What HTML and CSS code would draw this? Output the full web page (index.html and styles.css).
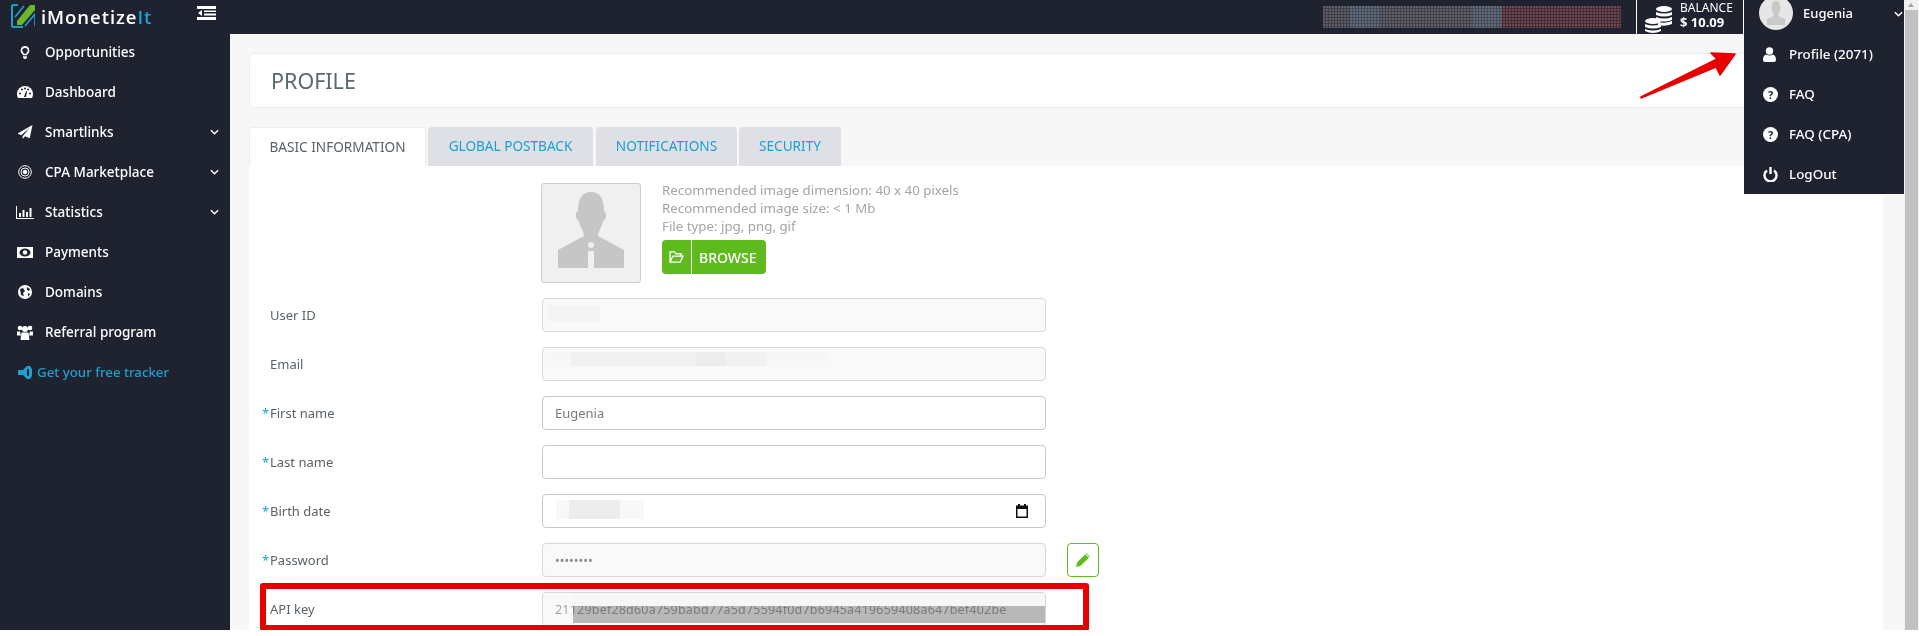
FILE: index.html
```html
<!DOCTYPE html>
<html lang="en">
<head>
<meta charset="utf-8">
<title>Profile</title>
<link rel="stylesheet" href="styles.css">
</head>
<body>
<div class="app">
  <div class="window">
    <header class="topbar">
      <div class="brand">
        <svg class="logo" viewBox="0 0 24 24" width="24" height="24"><path d="M7 1H2.500Q1 1 1 2.500V21.500Q1 23 2.500 23H12" fill="none" stroke="#1f9fd0" stroke-width="2"/><path d="M6 17 19 1H24V6L11 21H6Z" fill="#6cb52d"/><path d="M4 13 13 2M14 22 24 10V22" stroke="#1f9fd0" stroke-width="1.600" fill="none"/></svg>
        <span class="brand-name">iMonetize<span class="brand-it">It</span></span>
      </div>
      <svg class="toggle" viewBox="0 0 19 14" width="19" height="14"><path d="M0 0H19V3H0ZM7 4.500H19V6H7ZM7 7.500H19V9.500H7ZM0 11H19V14H0ZM5 4V10L1 7Z" fill="#fff"/></svg>
      <div class="top-fill"><div class="blur-top"></div></div>
      <div class="balance">
        <svg class="coins" viewBox="0 0 28 30" width="28" height="30" fill="#fff"><ellipse cx="19" cy="5" rx="8" ry="3"/><path d="M11 8q8 3 16 0v3q-8 3-16 0ZM11 13q8 3 16 0v3q-8 3-16 0ZM13 18q7 2 14-1v3q-7 3-14 1Z"/><ellipse cx="8" cy="17" rx="8" ry="3"/><path d="M0 20q8 3 16 0v3q-8 3-16 0ZM0 25q8 3 16 0v2q-8 4-16 0Z"/></svg>
        <div class="balance-text"><span class="balance-label">BALANCE</span><strong class="balance-value">$ 10.09</strong></div>
      </div>
      <div class="user">
        <div class="avatar-small">
          <svg viewBox="0 0 34 34" width="34" height="34"><circle cx="17" cy="17" r="17" fill="#e6e6e6"/><path d="M17 5c3 0 4 2 4 5l1 1-1 3c0 2-2 5-2 6l7 3v6H8v-6l7-3c0-1-2-4-2-6l-1-3 1-1c0-3 1-5 4-5Z" fill="#c9c9c9"/></svg>
        </div>
        <span class="user-name">Eugenia</span>
        <svg class="chev" viewBox="0 0 10 6" width="9" height="6"><path d="M1 1 5 5 9 1" fill="none" stroke="#fff" stroke-width="1.600"/></svg>
      </div>
    </header>
    <div class="body">
      <aside class="sidebar">
        <nav class="nav">
          <a class="nav-item"><span class="nav-icon"><svg viewBox="0 0 12 16" width="10" height="13" fill="#fff"><path d="M6 0a5.500 5.500 0 0 1 3 10q-.5.800-.5 1.500h-5Q3.500 10.800 3 10A5.500 5.500 0 0 1 6 0Zm0 2.500a3 3 0 0 0-2 5.500L4.500 9.500h3L8 8A3 3 0 0 0 6 2.500ZM3.500 12.500h5V14l-1.500 2H5l-1.500-2Z"/></svg></span>Opportunities</a>
          <a class="nav-item"><span class="nav-icon"><svg viewBox="0 0 16 12" width="16" height="12" fill="#fff"><path d="M8 0a8 8 0 0 1 8 8q0 2-1 4H1Q0 10 0 8a8 8 0 0 1 8-8Z"/><g fill="#1f2330"><circle cx="3" cy="7.500" r="1"/><circle cx="5" cy="3.500" r="1"/><circle cx="8" cy="2.500" r="1"/><circle cx="11" cy="3.500" r="1"/><circle cx="13" cy="7.500" r="1"/><path d="M7 11 9 5l1 .5L9 11Z"/></g></svg></span>Dashboard</a>
          <a class="nav-item"><span class="nav-icon"><svg viewBox="0 0 16 16" width="16" height="15" fill="#fff"><path d="M16 0 13 14 8 12 5.500 15V12L13 3 4 11 0 9Z"/></svg></span>Smartlinks<svg class="chev nav-chev" viewBox="0 0 10 6" width="9" height="6"><path d="M1 1 5 5 9 1" fill="none" stroke="#fff" stroke-width="1.600"/></svg></a>
          <a class="nav-item"><span class="nav-icon"><svg viewBox="0 0 14 14" width="14" height="14" fill="none" stroke="#fff"><circle cx="7" cy="7" r="6.300"/><circle cx="7" cy="7" r="4"/><circle cx="7" cy="7" r="1.800" fill="#fff"/></svg></span>CPA Marketplace<svg class="chev nav-chev" viewBox="0 0 10 6" width="9" height="6"><path d="M1 1 5 5 9 1" fill="none" stroke="#fff" stroke-width="1.600"/></svg></a>
          <a class="nav-item"><span class="nav-icon"><svg viewBox="0 0 18 13" width="18" height="13" fill="#fff"><path d="M0 0H1V12H18V13H0ZM3 7H5V11H3ZM6.500 4H8.500V11H6.500ZM10 6H12V11H10ZM13.500 2H15.500V11H13.500Z"/></svg></span>Statistics<svg class="chev nav-chev" viewBox="0 0 10 6" width="9" height="6"><path d="M1 1 5 5 9 1" fill="none" stroke="#fff" stroke-width="1.600"/></svg></a>
          <a class="nav-item"><span class="nav-icon"><svg viewBox="0 0 16 11" width="16" height="11"><path d="M0 0H16V11H0Z" fill="#fff"/><ellipse cx="8" cy="5.500" rx="5.500" ry="4" fill="#1f2330"/><circle cx="8" cy="5.500" r="2.200" fill="#fff"/></svg></span>Payments</a>
          <a class="nav-item"><span class="nav-icon"><svg viewBox="0 0 14 14" width="14" height="14"><circle cx="7" cy="7" r="7" fill="#fff"/><path d="M2 4 5 3 7 6 5 8 6 11 3 10ZM9 2 12 4 11 6 9 5ZM10 8 12 9 10 12Z" fill="#1f2330"/></svg></span>Domains</a>
          <a class="nav-item"><span class="nav-icon"><svg viewBox="0 0 16 15" width="16" height="15" fill="#fff"><circle cx="3" cy="3" r="2.300"/><circle cx="13" cy="3" r="2.300"/><circle cx="8" cy="4" r="3"/><path d="M0 6.500h3l1 4H0ZM16 6.500h-3l-1 4h4ZM4.500 7.500h7l1 7.500h-9Z"/></svg></span>Referral program</a>
          <a class="nav-item nav-tracker"><svg class="tracker-icon" viewBox="0 0 14 13" width="14" height="13" fill="#1f9fd0"><path d="M0 4h5L9 0h3l2 3v7l-2 3H9L5 9H0ZM9 3v7h2V3Z" fill-rule="evenodd"/></svg>Get your free tracker</a>
        </nav>
      </aside>
      <main class="content">
        <div class="page-head"><h1 class="page-title">PROFILE</h1></div>
        <div class="tabs">
          <a class="tab tab-active">BASIC INFORMATION</a>
          <a class="tab tab-postback">GLOBAL POSTBACK</a>
          <a class="tab tab-notif">NOTIFICATIONS</a>
          <a class="tab tab-security">SECURITY</a>
        </div>
        <section class="panel">
          <div class="row-photo">
            <div class="photo">
              <svg viewBox="0 0 66 76" width="66" height="76"><path d="M33 0c9 0 13 7 13 19 3 1 3 8-1 10-1 6-5 11-5 15l26 14v20H0V58l26-14c0-4-4-9-5-15-4-2-4-9-1-10C20 7 24 0 33 0Z" fill="#c6c6c6"/><circle cx="33" cy="53" r="3" fill="#f0f0f0"/><path d="M30 59h6v19h-6Z" fill="#f0f0f0"/></svg>
            </div>
            <div class="photo-info">
              <div class="hint">Recommended image dimension: 40 x 40 pixels</div>
              <div class="hint">Recommended image size: &lt; 1 Mb</div>
              <div class="hint">File type: jpg, png, gif</div>
              <button class="browse" type="button"><span class="browse-icon"><svg viewBox="0 0 16 13" width="15" height="12" fill="none" stroke="#fff" stroke-width="1.400"><path d="M1 12V1h5l1.500 2H13v2.500M1 12h11l3-6.500H4Z"/></svg></span><span class="browse-text">BROWSE</span></button>
            </div>
          </div>
          <div class="field"><label class="label">User ID</label><div class="input input-ro"><span class="smudge smudge-id"></span></div></div>
          <div class="field"><label class="label">Email</label><div class="input input-ro"><span class="smudge smudge-mail"></span></div></div>
          <div class="field"><label class="label"><i class="req">*</i>First name</label><div class="input">Eugenia</div></div>
          <div class="field"><label class="label"><i class="req">*</i>Last name</label><div class="input"></div></div>
          <div class="field"><label class="label"><i class="req">*</i>Birth date</label><div class="input"><span class="smudge smudge-date"></span><svg class="cal" viewBox="0 0 12 14" width="12" height="14"><path d="M2 0H4V1.500H8V0H10V1.500H12V14H0V1.500H2ZM1.500 5V12.500H10.500V5Z" fill="#111"/></svg></div></div>
          <div class="field"><label class="label"><i class="req">*</i>Password</label><div class="input input-ro input-pass">••••••••</div><button class="edit" type="button"><svg viewBox="0 0 12 12" width="14" height="14" fill="#5fba1e"><path d="M0 12 1 8 8 1l3 3-7 7ZM9 0l3 3-.5.500-3-3Z"/></svg></button></div>
          <div class="field"><label class="label">API key</label><div class="input input-ro input-key"><span class="key-text">21129bef28d60a759babd77a5d75594f0d7b6945a419659408a647bef402be</span><span class="smudge smudge-keytop"></span><span class="smudge smudge-key"></span></div></div>
        </section>
      </main>
    </div>
    <div class="menu">
      <a class="menu-item"><span class="menu-icon"><svg viewBox="0 0 13 15" width="13" height="15" fill="#fff"><circle cx="6.500" cy="4" r="3.700"/><path d="M3 7.500Q6.500 9.500 10 7.500 13 8.500 13 13q0 2-2 2H2q-2 0-2-2 0-4.500 3-5.500Z"/></svg></span>Profile (2071)</a>
      <a class="menu-item"><span class="menu-icon"><svg viewBox="0 0 15 15" width="15" height="15"><circle cx="7.500" cy="7.500" r="7.500" fill="#fff"/><text class="q" x="7.500" y="11.500" text-anchor="middle">?</text></svg></span>FAQ</a>
      <a class="menu-item"><span class="menu-icon"><svg viewBox="0 0 15 15" width="15" height="15"><circle cx="7.500" cy="7.500" r="7.500" fill="#fff"/><text class="q" x="7.500" y="11.500" text-anchor="middle">?</text></svg></span>FAQ (CPA)</a>
      <a class="menu-item"><span class="menu-icon"><svg viewBox="0 0 15 15" width="15" height="15" fill="none" stroke="#fff" stroke-width="2.400"><path d="M4 3.500a6 6 0 1 0 7 0"/><path d="M7.500 0V7"/></svg></span>LogOut</a>
    </div>
    <svg class="arrow" viewBox="0 0 100 50" width="100" height="50"><path d="M1 45 77 7 71 1 95 2 80 23 76 15 1 46Z" fill="#e60000" stroke="#e60000" stroke-width="1.500" stroke-linejoin="round"/></svg>
    <div class="redbox"></div>
  </div>
  <div class="scrollbar"><span class="scroll-up"></span><span class="scroll-thumb"></span></div>
</div>
</body>
</html>
```
FILE: styles.css
```css
* { box-sizing: border-box; }
html, body { margin: 0; padding: 0; background: #fff; overflow: hidden; }
body { font-family: "Noto Sans", "Open Sans", sans-serif; font-size: 13px; color: #5a6268; }
a { text-decoration: none; }

.app { display: flex; height: 630px; width: 1919px; }
.window { position: relative; flex: 1; min-width: 0; display: flex; flex-direction: column; height: 630px; background: #f7f7f7; }

.topbar { display: flex; align-items: stretch; height: 34px; background: #1f2330; color: #fff; flex: none; }
.brand { width: 197px; display: flex; align-items: flex-start; padding: 4px 0 0 11px; gap: 6px; flex: none; }
.logo { flex: none; }
.brand-name { font-family: "Open Sans", sans-serif; font-size: 18.500px; font-weight: 600; line-height: 26px; letter-spacing: .95px; }
.brand-it { color: #1f9fd0; }
.toggle { margin-top: 6px; flex: none; }
.top-fill { flex: 1; display: flex; justify-content: flex-end; padding: 6px 15px 6px 0; }
.blur-top { width: 298px; height: 22px; background-image: radial-gradient(circle at 1px 1px, rgba(255,255,255,.16) 1px, transparent 1.500px), linear-gradient(90deg, #3f3e48 0 9%, #444c5c 9% 19%, #413f4a 19% 50%, #464c5c 50% 60%, #4a2933 60% 100%); background-size: 3px 3px, 100% 100%; }
.balance { width: 107px; border-left: 1px solid #fff; display: flex; align-items: center; padding-left: 8px; gap: 7px; flex: none; }
.coins { flex: none; margin-top: 3px; }
.balance-text { display: flex; flex-direction: column; }
.balance-label { font-size: 12px; line-height: 13px; margin-top: -3px; }
.balance-value { font-size: 13px; line-height: 17px; font-weight: 700; }
.user { width: 161px; position: relative; border-left: 1px solid #fff; display: flex; align-items: flex-start; flex: none; padding-left: 15px; }
.avatar-small { margin-top: -4px; width: 34px; height: 34px; flex: none; }
.user-name { font-size: 13px; line-height: 26px; margin-left: 10px; font-weight: 500; }
.user .chev { margin: 11px 0 0 41px; }

.body { flex: 1; display: flex; min-height: 0; }
.sidebar { width: 230px; flex: none; background: #1f2330; }
.nav { display: flex; flex-direction: column; }
.nav-item { height: 40px; display: flex; align-items: center; color: #fff; font-size: 13.500px; font-weight: 500; }
.nav-item:first-child { margin-top: -2px; }
.nav-icon { width: 45px; padding-left: 16px; padding-right: 11px; display: flex; justify-content: center; flex: none; }
.nav-chev { margin-left: auto; margin-right: 11px; }
.nav-tracker { color: #1f9fd0; padding-left: 18px; gap: 5px; font-size: 13.250px; }
.tracker-icon { flex: none; }

.content { flex: 1; min-width: 0; padding: 19px 21px 0 19px; }
.page-head { height: 55px; background: #fff; border: 1px solid #ededed; border-radius: 4px; display: flex; align-items: center; padding-left: 21px; }
.page-title { margin: 0; font-size: 21.500px; font-weight: 400; color: #5a6870; }
.tabs { display: flex; gap: 2px; margin-top: 19px; height: 39px; }
.tab { display: flex; align-items: center; justify-content: center; height: 39px; padding-bottom: 2px; background: #dfe0e5; color: #17a2d6; border-radius: 4px 4px 0 0; font-size: 13.600px; }
.tab-active { width: 177px; background: #fff; color: #5a6268; border: 1px solid #ededed; border-bottom: 0; }
.tab-postback { width: 165px; }
.tab-notif { width: 141px; margin-left: 1px; }
.tab-security { width: 102px; }
.panel { background: #fff; padding: 17px 0 0 0; height: 464px; }
.row-photo { display: flex; padding-left: 292px; margin-bottom: 15px; gap: 21px; }
.photo { width: 100px; height: 100px; background: #f0f0f0; border: 1px solid #ccc; border-radius: 3px; display: flex; align-items: flex-end; justify-content: center; padding-bottom: 14px; flex: none; }
.photo-info { display: flex; flex-direction: column; margin-top: -2px; }
.hint { font-size: 13.300px; line-height: 18px; color: #a4a4a4; }
.browse { margin-top: 5px; width: 104px; height: 34px; border: 0; padding: 0; border-radius: 4px; background: #5fba1e; color: #fff; font: 500 14px "Noto Sans", sans-serif; display: flex; align-items: center; }
.browse-icon { width: 30px; height: 100%; display: flex; align-items: center; justify-content: center; border-right: 1px solid #fff; }
.browse-text { padding-left: 7px; }

.field { display: flex; align-items: center; height: 34px; margin-bottom: 15px; padding-left: 13px; position: relative; }
.label { width: 280px; padding-left: 8px; font-size: 13px; color: #5a6268; position: relative; flex: none; }
.req { position: absolute; left: 0; top: 0; color: #17a2d6; font-style: normal; }
.input { position: relative; width: 504px; height: 34px; border: 1px solid #c8c8c8; border-radius: 4px; background: #fff; padding: 0 12px; display: flex; align-items: center; font-size: 13px; color: #7a7a7a; overflow: hidden; flex: none; }
.input-ro { background: #f9f9f9; border-color: #d8d8d8; }
.input-pass { color: #8a8a8a; font-size: 12.500px; }
.input-key { color: #a6a6a6; white-space: nowrap; }
.key-text { display: block; flex: none; font-size: 12.500px; letter-spacing: .2px; }
.smudge { position: absolute; display: block; }
.smudge-id { left: 5px; top: 6px; width: 52px; height: 16px; background: #f4f4f4; }
.smudge-mail { left: 2px; top: 4px; width: 285px; height: 14px; background: linear-gradient(90deg, #f7f7f7 0 9%, #f1f1f1 9% 53%, #ececec 53% 63%, #f1f1f1 63% 78%, #f7f7f7 78%); }
.smudge-date { left: 13px; top: 5px; width: 88px; height: 19px; background: linear-gradient(90deg, #f8f8f8 0 15%, #ededed 15% 73%, #f8f8f8 73%); }
.smudge-keytop { left: 30px; top: 0; width: 472px; height: 13px; background: #f6f6f6; }
.smudge-key { left: 30px; top: 13px; width: 472px; height: 17px; background: #bdbdbd; mix-blend-mode: multiply; }
.cal { position: absolute; right: 17px; top: 9px; }
.edit { width: 32px; height: 34px; margin-left: 21px; border: 1px solid #5fba1e; border-radius: 4px; background: #fff; padding: 0; display: flex; align-items: center; justify-content: center; }

.menu { position: absolute; left: 1744px; top: 34px; width: 160px; height: 160px; background: #1f2330; display: flex; flex-direction: column; }
.menu-item { height: 40px; display: flex; align-items: center; color: #fff; font-size: 13.400px; font-weight: 500; }
.menu-icon { width: 45px; padding-left: 19px; flex: none; display: flex; }
.q { font: 700 11px "Noto Sans", sans-serif; fill: #1f2330; }

.arrow { position: absolute; left: 1640px; top: 52px; }
.redbox { position: absolute; left: 260px; top: 583px; width: 829px; height: 48px; border: 6px solid #e60000; border-radius: 3px; box-shadow: 0 1px 1px rgba(60,60,60,.5); }

.scrollbar { width: 15px; height: 630px; flex: none; background: #f1f1f1; position: relative; padding: 10px 1px 0; }
.scroll-up { position: absolute; left: 4px; top: 3px; border: 3.500px solid transparent; border-top: 0; border-bottom: 4px solid #a3a3a3; }
.scroll-thumb { display: block; height: 100%; background: #c1c1c1; }
```
